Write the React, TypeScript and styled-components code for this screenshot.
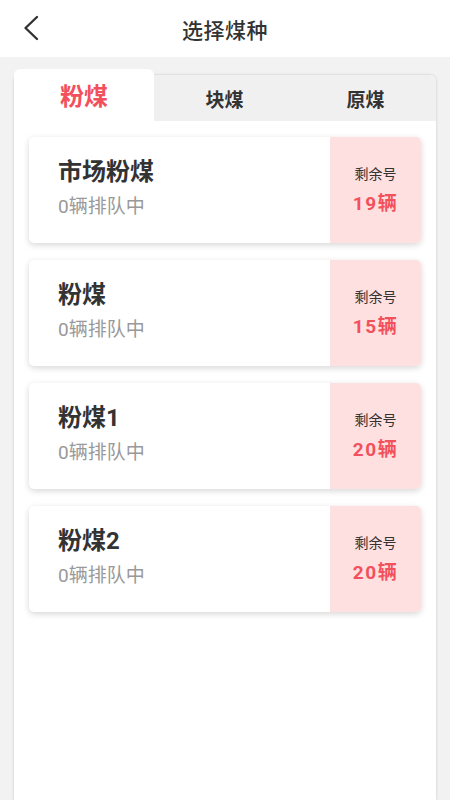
import styled, { createGlobalStyle } from "styled-components";

const GlobalStyle = createGlobalStyle`
    html, body {
        margin: 0;
        padding: 0;
        background: #f2f2f2;
        font-family: Roboto, "Noto Sans CJK SC", sans-serif;
    }
`;

const TABS = ["粉煤", "块煤", "原煤"];

const COALS = [
    { name: "市场粉煤", queue: 0, left: 19 },
    { name: "粉煤", queue: 0, left: 15 },
    { name: "粉煤1", queue: 0, left: 20 },
    { name: "粉煤2", queue: 0, left: 20 },
];

export default function App() {
    const active = 0;

    return (
        <Page>
            <GlobalStyle />
            <Header>
                <BackButton>
                    <svg width="20" height="26" viewBox="0 0 20 26" fill="none">
                        <path
                            d="M16 2 L4.5 13 L16 24"
                            stroke="#333"
                            strokeWidth="2.4"
                            strokeLinecap="round"
                            strokeLinejoin="round"
                        />
                    </svg>
                </BackButton>
                <Title>选择煤种</Title>
            </Header>

            <Body>
                <Panel>
                    <TabBar>
                        {TABS.map((tab, idx) => (
                            <Tab $active={idx === active} key={tab}>
                                {tab}
                            </Tab>
                        ))}
                    </TabBar>

                    <CardList>
                        {COALS.map((coal) => (
                            <Card key={coal.name}>
                                <CardInfo>
                                    <CoalName>{coal.name}</CoalName>
                                    <Queue>{coal.queue}辆排队中</Queue>
                                </CardInfo>
                                <Remain>
                                    <RemainLabel>剩余号</RemainLabel>
                                    <RemainCount>{coal.left}辆</RemainCount>
                                </Remain>
                            </Card>
                        ))}
                    </CardList>
                </Panel>
            </Body>
        </Page>
    );
}

const Page = styled.div`
    width: 450px;
    height: 800px;
    display: flex;
    flex-direction: column;
    overflow: hidden;
    background: #f2f2f2;
`;

const Header = styled.div`
    height: 57px;
    flex-shrink: 0;
    background: #fff;
    display: flex;
    align-items: center;
    justify-content: center;
    position: relative;
`;

const BackButton = styled.div`
    position: absolute;
    left: 21px;
    top: 15px;
    width: 20px;
    height: 26px;
`;

const Title = styled.div`
    font-family: "Noto Sans CJK SC", sans-serif;
    font-size: 21px;
    font-weight: 500;
    color: #333;
    letter-spacing: 0.5px;
`;

const Body = styled.div`
    flex: 1;
    padding: 18px 14px 0;
    display: flex;
`;

const Panel = styled.div`
    flex: 1;
    background: #fff;
    border-radius: 6px 6px 0 0;
    box-shadow: 0 0 3px rgba(0, 0, 0, 0.18);
    display: flex;
    flex-direction: column;
`;

const TabBar = styled.div`
    height: 46px;
    display: grid;
    grid-template-columns: 140px 1fr 1fr;
    background: #f0f0f0;
    border-radius: 6px 6px 0 0;
    align-items: stretch;
`;

const Tab = styled.div<{ $active?: boolean }>`
    display: flex;
    align-items: center;
    justify-content: center;
    font-family: "Noto Sans CJK SC", sans-serif;
    font-weight: 700;
    font-size: ${({ $active }) => ($active ? "24px" : "19px")};
    color: ${({ $active }) => ($active ? "#f2505c" : "#333")};
    background: ${({ $active }) => ($active ? "#fff" : "transparent")};
    border-radius: 6px 6px 0 0;
    margin-top: ${({ $active }) => ($active ? "-6px" : "0")};
    padding-bottom: ${({ $active }) => ($active ? "2px" : "0")};
`;

const CardList = styled.div`
    display: flex;
    flex-direction: column;
    gap: 17px;
    padding: 16px 15px 0;
`;

const Card = styled.div`
    height: 106px;
    display: flex;
    background: #fff;
    border-radius: 5px;
    overflow: hidden;
    box-shadow: 0 2px 6px rgba(0, 0, 0, 0.16);
`;

const CardInfo = styled.div`
    flex: 1;
    padding: 18px 0 0 29px;
    display: flex;
    flex-direction: column;
    gap: 3px;
`;

const CoalName = styled.div`
    font-family: Roboto, "Noto Sans CJK SC", sans-serif;
    font-size: 24px;
    font-weight: 700;
    color: #333;
    line-height: 34px;
`;

const Queue = styled.div`
    font-family: Roboto, "Noto Sans CJK SC", sans-serif;
    font-size: 19px;
    color: #999;
    line-height: 30px;
`;

const Remain = styled.div`
    width: 91px;
    background: #ffe0e0;
    display: flex;
    flex-direction: column;
    align-items: center;
    justify-content: center;
    gap: 5px;
    padding-bottom: 2px;
`;

const RemainLabel = styled.div`
    font-family: "Noto Sans CJK SC", sans-serif;
    font-size: 14px;
    color: #333;
`;

const RemainCount = styled.div`
    font-family: Roboto, "Noto Sans CJK SC", sans-serif;
    font-size: 19px;
    font-weight: 700;
    color: #f2505c;
    letter-spacing: 1.5px;
`;
